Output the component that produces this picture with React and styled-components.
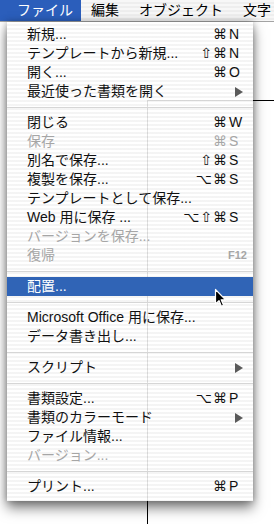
import React from "react";
import styled, { createGlobalStyle } from "styled-components";

const Global = createGlobalStyle`
  html, body { margin: 0; padding: 0; background: #fff; }
  body {
    width: 274px; height: 524px; overflow: hidden;
    font-family: "Liberation Sans", "Noto Sans CJK JP", sans-serif;
    -webkit-font-smoothing: antialiased;
  }
`;

const Screen = styled.div`
  position: relative;
  width: 274px;
  height: 524px;
  overflow: hidden;
  background: #fff;
  display: flex;
  flex-direction: column;
`;

const MenuBar = styled.div`
  position: relative;
  z-index: 2;
  flex-shrink: 0;
  height: 21px;
  border-bottom: 1px solid #a4a4a4;
  background: repeating-linear-gradient(to bottom, #f7f7f7 0 2px, #eeeeee 2px 4px);
  display: flex;
  align-items: stretch;
`;

const MenuTitle = styled.div`
  padding: ${(p) => (p.$first ? "0 8px 0 17px" : "0 10px")};
  font-size: 14px;
  line-height: 21px;
  white-space: nowrap;
  color: ${(p) => (p.$active ? "#fff" : "#000")};
  background: ${(p) => (p.$active ? "#2b5ebb" : "transparent")};
`;

const Desk = styled.div`
  flex: 1;
  display: flex;
  flex-direction: column;
`;

const Artboard = styled.div`
  flex: 1;
  margin: 78px 0 0 147px;
  border-top: 1px solid #000;
  border-left: 1px solid #000;
`;

const Menu = styled.div`
  position: absolute;
  z-index: 3;
  top: 22px;
  left: 7px;
  width: 246px;
  padding: 3px 0 5px;
  background: repeating-linear-gradient(
    to bottom,
    rgba(255, 255, 255, 0.88) 0 2px,
    rgba(243, 243, 243, 0.88) 2px 4px
  );
  box-shadow: 0 7px 12px rgba(0, 0, 0, 0.5), 0 0 7px rgba(0, 0, 0, 0.3);
`;

const Row = styled.div`
  display: grid;
  grid-template-columns: 1fr auto 25px;
  align-items: center;
  height: 19px;
  padding-left: 20px;
  font-size: 14px;
  line-height: 19px;
  color: ${(p) => (p.$active ? "#fff" : p.$disabled ? "#a6a6a6" : "#111")};
  background: ${(p) => (p.$active ? "#3064b6" : "transparent")};
`;

const Label = styled.span`
  white-space: nowrap;
`;

const Mods = styled.span`
  font-family: "DejaVu Sans", sans-serif;
  font-size: 14px;
  letter-spacing: 1px;
  text-align: right;
  white-space: nowrap;
`;

const Key = styled.span`
  font-family: "Liberation Sans", sans-serif;
  font-size: 14px;
  padding-left: 1px;
`;

const FKey = styled.span`
  grid-column: 3;
  font-family: "Liberation Sans", sans-serif;
  font-size: 11px;
  font-weight: bold;
`;

const Arrow = styled.svg`
  grid-column: 3;
  margin-left: 7px;
  display: block;
`;

const Sep = styled.div`
  height: 12px;
  display: flex;
  align-items: center;
  &::after {
    content: "";
    flex: 1;
    height: 1px;
    background: #d6d6d6;
  }
`;

const Cursor = styled.svg`
  position: absolute;
  z-index: 4;
  left: 214px;
  top: 288px;
`;

const items = [
  { label: "新規...", mods: "⌘", key: "N" },
  { label: "テンプレートから新規...", mods: "⇧⌘", key: "N" },
  { label: "開く...", mods: "⌘", key: "O" },
  { label: "最近使った書類を開く", sub: true },
  { sep: true },
  { label: "閉じる", mods: "⌘", key: "W" },
  { label: "保存", mods: "⌘", key: "S", disabled: true },
  { label: "別名で保存...", mods: "⇧⌘", key: "S" },
  { label: "複製を保存...", mods: "⌥⌘", key: "S" },
  { label: "テンプレートとして保存..." },
  { label: "Web 用に保存 ...", mods: "⌥⇧⌘", key: "S" },
  { label: "バージョンを保存...", disabled: true },
  { label: "復帰", fkey: "F12", disabled: true },
  { sep: true },
  { label: "配置...", active: true },
  { sep: true },
  { label: "Microsoft Office 用に保存..." },
  { label: "データ書き出し..." },
  { sep: true },
  { label: "スクリプト", sub: true },
  { sep: true },
  { label: "書類設定...", mods: "⌥⌘", key: "P" },
  { label: "書類のカラーモード", sub: true },
  { label: "ファイル情報..." },
  { label: "バージョン...", disabled: true },
  { sep: true },
  { label: "プリント...", mods: "⌘", key: "P" },
];

export default function App() {
  return (
    <Screen>
      <Global />
      <MenuBar>
        <MenuTitle $first $active>ファイル</MenuTitle>
        <MenuTitle>編集</MenuTitle>
        <MenuTitle>オブジェクト</MenuTitle>
        <MenuTitle>文字</MenuTitle>
      </MenuBar>
      <Desk>
        <Artboard />
      </Desk>
      <Menu>
        {items.map((it, i) =>
          it.sep ? (
            <Sep key={i} />
          ) : (
            <Row key={i} $disabled={it.disabled} $active={it.active}>
              <Label>{it.label}</Label>
              {it.mods ? <Mods>{it.mods}</Mods> : null}
              {it.key ? <Key>{it.key}</Key> : null}
              {it.fkey ? <FKey>{it.fkey}</FKey> : null}
              {it.sub ? (
                <Arrow width="8" height="10" viewBox="0 0 8 10">
                  <polygon points="0,0 8,5 0,10" fill="#5a5a5a" />
                </Arrow>
              ) : null}
            </Row>
          )
        )}
      </Menu>
      <Cursor width="13" height="20" viewBox="0 0 13 20">
        <path
          d="M1.5 1.5 L1.5 16 L5 12.6 L7.4 18.2 L9.6 17.2 L7.2 11.8 L11.6 11.8 Z"
          fill="#000"
          stroke="#fff"
          strokeWidth="1.2"
          strokeLinejoin="round"
        />
      </Cursor>
    </Screen>
  );
}
